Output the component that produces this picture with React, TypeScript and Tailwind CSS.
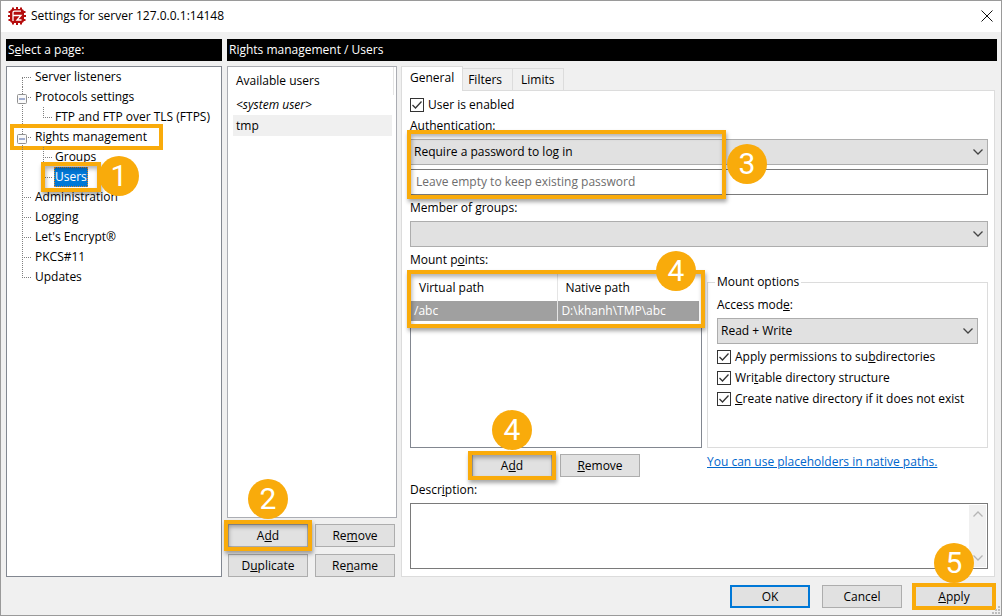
import React, { useState } from "react";
import clsx from "clsx";

type TreeNode = {
  label: string;
  level?: number;
  expandable?: boolean;
  first?: boolean;
  last?: boolean;
  lastChild?: boolean;
  mark?: boolean;
};

const pages: TreeNode[] = [
  { label: "Server listeners", first: true },
  { label: "Protocols settings", expandable: true },
  { label: "FTP and FTP over TLS (FTPS)", level: 1, lastChild: true },
  { label: "Rights management", expandable: true, mark: true },
  { label: "Groups", level: 1 },
  { label: "Users", level: 1, lastChild: true },
  { label: "Administration" },
  { label: "Logging" },
  { label: "Let's Encrypt®" },
  { label: "PKCS#11" },
  { label: "Updates", last: true },
];

const Mark = ({ className }: { className: string }) => (
  <span
    className={clsx(
      "pointer-events-none absolute z-10 border-4 border-[#f9ab0b] shadow-[1px_3px_4px_rgba(0,0,0,0.35),inset_1px_3px_4px_rgba(0,0,0,0.3)]",
      className,
    )}
  />
);

const Step = ({ n, className }: { n: number; className: string }) => (
  <span
    className={clsx(
      "pointer-events-none absolute z-20 flex size-10 items-center justify-center rounded-full bg-[#f9ab0b] font-['Roboto',sans-serif] text-[30px] leading-none text-white",
      className,
    )}
  >
    {n}
  </span>
);

const TreeLines = ({ node }: { node: TreeNode }) => {
  const child = node.level === 1;
  return (
    <svg
      width={child ? 47 : 27}
      height="20"
      className="shrink-0"
      stroke="#808080"
      fill="none"
      aria-hidden="true"
    >
      <g strokeDasharray="1 1">
        <path
          d={
            node.first ? "M15.5 11V20" : node.last ? "M15.5 0V11" : "M15.5 0V20"
          }
        />
        {child ? (
          <path
            d={
              node.lastChild ? "M36.5 0V11M36 10.5H46" : "M36.5 0V20M36 10.5H46"
            }
          />
        ) : (
          <path d="M15 10.5H25" />
        )}
      </g>
      {node.expandable && (
        <>
          <rect
            x="10.5"
            y="7.5"
            width="9"
            height="9"
            rx="1"
            fill="#fafafa"
            stroke="#919191"
          />
          <path d="M12 12H18" stroke="#4b63a7" />
        </>
      )}
    </svg>
  );
};

const PageTree = () => {
  const [current, setCurrent] = useState("Users");
  return (
    <ul className="flex-1 border border-[#828790] bg-white">
      {pages.map((node) => (
        <li key={node.label} className="relative flex h-5 items-center">
          <TreeLines node={node} />
          <button
            type="button"
            onClick={() => setCurrent(node.label)}
            className={clsx(
              "h-5 px-px whitespace-nowrap",
              node.label === current &&
                "bg-[#0078d7] text-white outline-1 -outline-offset-1 outline-dotted outline-[#e08728]",
            )}
          >
            {node.label}
          </button>
          {node.mark && (
            <span className="pointer-events-none absolute -top-[3px] left-[3px] h-[26px] w-[153px] border-4 border-[#f9ab0b]" />
          )}
          {node.label === "Users" && (
            <>
              <Mark className="-top-[5px] left-[34px] h-[30px] w-[60px]" />
              <Step n={1} className="-top-[11px] left-[92px]" />
            </>
          )}
        </li>
      ))}
    </ul>
  );
};

type ButtonProps = {
  children: React.ReactNode;
  className?: string;
  primary?: boolean;
};

const Button = ({ children, className, primary }: ButtonProps) => (
  <button
    type="button"
    className={clsx(
      "h-[23px] bg-[#e1e1e1] text-center",
      primary ? "border-2 border-[#0078d7]" : "border border-[#adadad]",
      className,
    )}
  >
    {children}
  </button>
);

const Chevron = ({ className }: { className?: string }) => (
  <svg
    width="10"
    height="6"
    viewBox="0 0 10 6"
    fill="none"
    stroke="currentColor"
    className={className}
    aria-hidden="true"
  >
    <path d="M0.5 0.5L5 5L9.5 0.5" strokeWidth="1.3" />
  </svg>
);

const Select = ({ id, options }: { id: string; options: string[] }) => (
  <div className="relative">
    <select
      id={id}
      className="block h-[26px] w-full appearance-none rounded-none border border-[#adadad] bg-[#e1e1e1] pl-[3px]"
    >
      {options.map((option) => (
        <option key={option}>{option}</option>
      ))}
    </select>
    <Chevron className="pointer-events-none absolute top-[10px] right-[5px] text-[#444]" />
  </div>
);

const Checkbox = ({ children }: { children: React.ReactNode }) => (
  <label className="flex h-[21px] items-center gap-1 whitespace-nowrap">
    <span className="relative size-[14px] shrink-0">
      <input
        type="checkbox"
        defaultChecked
        className="peer block size-[14px] appearance-none border border-[#333] bg-white"
      />
      <svg
        viewBox="0 0 14 14"
        className="pointer-events-none absolute inset-0 hidden size-[14px] peer-checked:block"
        fill="none"
        stroke="#333"
        strokeWidth="1.3"
        aria-hidden="true"
      >
        <path d="M2.5 7L5.5 10L11.5 3.5" />
      </svg>
    </span>
    <span>{children}</span>
  </label>
);

const Logo = () => (
  <svg width="18" height="18" viewBox="0 0 18 18" aria-hidden="true">
    <g stroke="#b50d0d" strokeWidth="2">
      <path d="M5 0.5V17.5M9 0V18M13 0.5V17.5M0.5 5H17.5M0 9H18M0.5 13H17.5" />
    </g>
    <rect x="2" y="2" width="14" height="14" rx="3" fill="#b50d0d" />
    <path
      d="M5 14V5.500Q5 4.200 6.500 4.200H13M5 8.500H13L9 13H13.500"
      fill="none"
      stroke="#fff"
      strokeWidth="1.3"
    />
  </svg>
);

const UserList = () => (
  <div className="flex w-[170px] shrink-0 flex-col">
    <div className="flex flex-1 flex-col border border-[#abadb3] bg-white pr-1 pl-[5px]">
      <div className="mr-[-2px] flex h-7 items-center border-r border-[#e5e5e5] pl-[3px]">
        Available users
      </div>
      <button type="button" className="h-5 pl-[3px] text-left italic">
        &lt;system user&gt;
      </button>
      <button type="button" className="h-[21px] bg-[#f0f0f0] pl-[3px] text-left">
        tmp
      </button>
    </div>
    <div className="mt-[6px] grid grid-cols-2 gap-[7px] pr-0.5 pl-px">
      <div className="relative flex">
        <Button className="flex-1">
          A<u>d</u>d
        </Button>
        <Mark className="-inset-1" />
        <Step n={2} className="-top-[45px] left-[20px]" />
      </div>
      <Button>
        Re<u>m</u>ove
      </Button>
      <Button>
        D<u>u</u>plicate
      </Button>
      <Button>
        Re<u>n</u>ame
      </Button>
    </div>
  </div>
);

const MountPoints = () => (
  <div className="relative border border-[#828790] bg-white pr-0.5">
    <table className="w-full table-fixed border-collapse text-left">
      <thead>
        <tr className="h-[27px]">
          <th className="w-[51%] border-r border-[#e5e5e5] pl-2 font-normal">
            Virtual path
          </th>
          <th className="pl-[7px] font-normal">Native path</th>
        </tr>
      </thead>
      <tbody>
        <tr className="h-5 bg-[#a0a0a0] text-white">
          <td className="border-r border-[#e5e5e5] pl-[3px]">/abc</td>
          <td className="pl-[3px]">D:\khanh\TMP\abc</td>
        </tr>
      </tbody>
    </table>
    <Mark className="-top-1 -right-1 -left-1 h-[58px]" />
    <Step n={4} className="-top-[23px] right-[5px]" />
  </div>
);

const General = () => (
  <div className="mr-0.5 flex flex-1 flex-col gap-1 border border-[#dcdcdc] bg-white pt-[3px] pr-[6px] pb-[7px] pl-2">
    <div className="-mb-[2px]">
      <Checkbox>User is enabled</Checkbox>
    </div>
    <label htmlFor="auth">Authentication:</label>
    <div className="relative flex flex-col gap-1">
      <Select id="auth" options={["Require a password to log in"]} />
      <input
        type="password"
        aria-label="Password"
        placeholder="Leave empty to keep existing password"
        className="h-[26px] w-full border border-[#7a7a7a] bg-white px-[5px] pb-0.5 placeholder:text-[#6d6d6d]"
      />
      <Mark className="-top-[9px] -bottom-1 -left-[3px] w-[319px]" />
      <Step n={3} className="top-[5px] left-[317px]" />
    </div>
    <label htmlFor="groups">
      Member of <u>g</u>roups:
    </label>
    <Select id="groups" options={[""]} />
    <span>
      Mount p<u>o</u>ints:
    </span>
    <div className="grid flex-1 grid-cols-[minmax(0,292fr)_minmax(0,281fr)] grid-rows-[1fr_auto] gap-x-[5px] gap-y-[6px]">
      <MountPoints />
      <fieldset className="min-w-0 border border-[#dcdcdc] px-[9px]">
        <legend className="-ml-0.5 px-0.5">Mount options</legend>
        <div className="flex flex-col gap-1 pt-[5px]">
          <label htmlFor="access">
            Access mod<u>e</u>:
          </label>
          <Select id="access" options={["Read + Write", "Read only"]} />
        </div>
        <div className="pt-[2px]">
          <Checkbox>
            Apply permissions to su<u>b</u>directories
          </Checkbox>
          <Checkbox>
            Wri<u>t</u>able directory structure
          </Checkbox>
          <Checkbox>
            <u>C</u>reate native directory if it does not exist
          </Checkbox>
        </div>
      </fieldset>
      <div className="flex justify-center gap-2">
        <div className="relative flex">
          <Button className="w-20">
            A<u>d</u>d
          </Button>
          <Mark className="-inset-x-1 -inset-y-[3px]" />
          <Step n={4} className="-top-[44px] left-[20px]" />
        </div>
        <Button className="w-20">
          <u>R</u>emove
        </Button>
      </div>
      <a href="#placeholders" className="leading-4 text-[#0066cc] underline">
        You can use placeholders in native paths.
      </a>
    </div>
    <label htmlFor="description">
      Descr<u>i</u>ption:
    </label>
    <div className="flex h-[66px] border border-[#7a7a7a] p-px">
      <textarea
        id="description"
        className="flex-1 resize-none overflow-hidden bg-white outline-none"
      />
      <div className="flex w-[17px] flex-col items-center justify-between bg-[#f0f0f0] py-[6px] text-[#b5b5b5]">
        <Chevron className="rotate-180" />
        <Chevron />
      </div>
    </div>
  </div>
);

export default function App() {
  return (
    <div className="flex min-h-screen flex-col border border-[#9a9a9a] bg-[#f0f0f0] font-['Open_Sans',sans-serif] text-[12px] leading-[18px] text-black">
      <header className="flex h-[31px] items-center justify-between bg-white pr-2 pb-[2px] pl-[7px]">
        <div className="flex items-center gap-[5px]">
          <Logo />
          <h1>Settings for server 127.0.0.1:14148</h1>
        </div>
        <button type="button" aria-label="Close">
          <svg width="12" height="12" viewBox="0 0 12 12" stroke="#111">
            <path d="M0.5 0.5L11.5 11.5M11.5 0.5L0.5 11.5" />
          </svg>
        </button>
      </header>

      <main className="flex flex-1 gap-[5px] pt-[7px] pr-1 pl-[5px]">
        <nav className="flex w-[216px] shrink-0 flex-col gap-[5px]">
          <h2 className="h-[22px] bg-black px-0.5 leading-[21px] text-white">
            S<u>e</u>lect a page:
          </h2>
          <PageTree />
        </nav>
        <section className="flex flex-1 flex-col gap-[5px]">
          <h2 className="h-[22px] bg-black px-0.5 leading-[21px] text-white">
            Rights management / Users
          </h2>
          <div className="flex flex-1 gap-1">
            <UserList />
            <div className="flex flex-1 flex-col">
              <div className="-mb-px flex items-end">
                <button
                  type="button"
                  className="relative h-[25px] border border-b-0 border-[#dcdcdc] bg-white px-2 pb-[3px]"
                >
                  General
                </button>
                <button
                  type="button"
                  className="h-[23px] border border-l-0 border-[#dcdcdc] pr-[10px] pl-[5px]"
                >
                  Filters
                </button>
                <button
                  type="button"
                  className="h-[23px] border border-l-0 border-[#dcdcdc] px-2"
                >
                  Limits
                </button>
              </div>
              <General />
            </div>
          </div>
        </section>
      </main>

      <footer className="relative flex h-[38px] items-start justify-end gap-3 pt-2 pr-[7px]">
        <Button primary className="w-20">
          OK
        </Button>
        <Button className="w-20">Cancel</Button>
        <div className="relative flex">
          <Button className="w-20">
            <u>A</u>pply
          </Button>
          <span className="pointer-events-none absolute -inset-0.5 border-4 border-[#f9ab0b]" />
          <Step n={5} className="-top-[42px] left-[20px]" />
        </div>
        <svg
          width="10"
          height="10"
          fill="#bdbdbd"
          className="absolute right-0 bottom-0"
          aria-hidden="true"
        >
          <path d="M7 1h2v2h-2zM4 4h2v2h-2zM7 4h2v2h-2zM1 7h2v2h-2zM4 7h2v2h-2zM7 7h2v2h-2z" />
        </svg>
      </footer>
    </div>
  );
}
